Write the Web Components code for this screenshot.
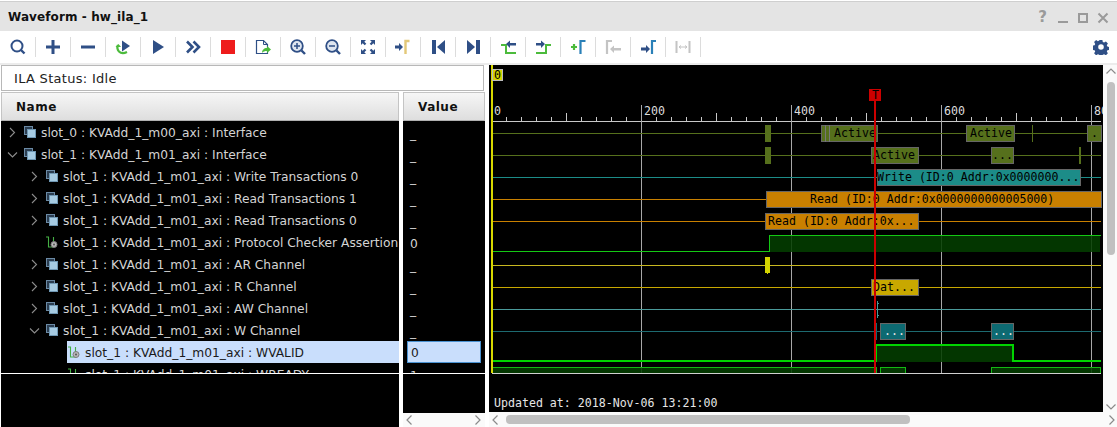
<!DOCTYPE html>
<html>
<head>
<meta charset="utf-8">
<title>Waveform - hw_ila_1</title>
<style>
  html, body { margin: 0; padding: 0; background: #fff; overflow: hidden; }
  body { width: 1117px; height: 427px; font-family: "DejaVu Sans", sans-serif; }
</style>
</head>
<body>
<wave-window></wave-window>
<script>
const BLUE = "#2f4f86";
const GREEN = "#4cbb3c";
const GREY = "#c4c4c4";

const TOOL_ICONS = {
  search: `<circle cx="9" cy="9" r="5.5" fill="none" stroke="${BLUE}" stroke-width="2"/><path d="M13 13l3.5 3.5" stroke="${BLUE}" stroke-width="2.4"/>`,
  plus: `<path d="M3 10h14M10 3v14" stroke="${BLUE}" stroke-width="3"/>`,
  minus: `<path d="M3 10h14" stroke="${BLUE}" stroke-width="3"/>`,
  rerun: `<path d="M9 3.5l8 5.5-8 5.5z" fill="${BLUE}"/><path d="M5 8a6 6 0 0 0 1 6.5c2 2 5 2 8 .5" fill="none" stroke="${GREEN}" stroke-width="2.2"/><path d="M2.5 10l3-3 2.5 3z" fill="${GREEN}"/>`,
  play: `<path d="M5 3l11 7-11 7z" fill="${BLUE}"/>`,
  fast: `<path d="M4 4.500l5.500 5.500-5.500 5.500M10.500 4.500l5.500 5.500-5.500 5.500" fill="none" stroke="${BLUE}" stroke-width="2.600"/>`,
  stop: `<rect x="3" y="3" width="14" height="14" fill="#ee1c1c"/>`,
  export: `<path d="M3.500 3.500h7l4 4v9h-11z" fill="#fff" stroke="${BLUE}" stroke-width="1.200"/><path d="M10.500 3.500v4h4" fill="none" stroke="${BLUE}"/><path d="M9 16c0-3 2-5 5-5v-2l4 3.500-4 3.500v-2c-2 0-4 .5-5 2z" fill="${GREEN}"/>`,
  zoomin: `<circle cx="9" cy="9" r="5.800" fill="#dfe6f0" stroke="${BLUE}" stroke-width="1.800"/><path d="M6 9h6M9 6v6" stroke="${BLUE}" stroke-width="1.500"/><path d="M13.500 13.500l3.500 3.500" stroke="${BLUE}" stroke-width="2.400"/>`,
  zoomout: `<circle cx="9" cy="9" r="5.800" fill="#dfe6f0" stroke="${BLUE}" stroke-width="1.800"/><path d="M6 9h6" stroke="${BLUE}" stroke-width="1.500"/><path d="M13.500 13.500l3.500 3.500" stroke="${BLUE}" stroke-width="2.400"/>`,
  fit: `<path d="M3 3h5l-1.700 1.700 2 2-1.600 1.600-2-2L3 8zM17 3v5l-1.700-1.700-2 2-1.600-1.600 2-2L12 3zM3 17v-5l1.700 1.700 2-2 1.600 1.600-2 2L8 17zM17 17h-5l1.700-1.700-2-2 1.600-1.600 2 2L17 12z" fill="${BLUE}"/>`,
  nextmark: `<path d="M2 8.500h4V6l4 4-4 4v-2.500H2z" fill="${BLUE}"/><path d="M12.500 17V4h4" fill="none" stroke="#e3c878" stroke-width="2.400"/>`,
  first: `<rect x="4" y="3" width="4" height="14" fill="${BLUE}"/><path d="M17 3v14l-8-7z" fill="${BLUE}"/>`,
  last: `<rect x="13" y="3" width="4" height="14" fill="${BLUE}"/><path d="M4 3v14l8-7z" fill="${BLUE}"/>`,
  fall: `<path d="M3 8h5v8h10" fill="none" stroke="${GREEN}" stroke-width="2"/><path d="M8 7l4-3.500V6h6v2.500h-6V11z" fill="${BLUE}"/>`,
  rise: `<path d="M3 16h10V8h5" fill="none" stroke="${GREEN}" stroke-width="2"/><path d="M12 7L8 3.500V6H3v2.500h5V11z" fill="${BLUE}"/>`,
  addmark: `<path d="M3 10h6M6 7v6" stroke="${GREEN}" stroke-width="2.200"/><path d="M12.500 17V4h5" fill="none" stroke="#2a80b8" stroke-width="2.200"/>`,
  prevmark: `<path d="M4 17V4h5" fill="none" stroke="${GREY}" stroke-width="2.200"/><path d="M7 12l4-3.500V11h7v2.500h-7V16z" fill="${GREY}"/>`,
  nextcur: `<path d="M3 10.500h5V8l4 4-4 4v-2.500H3z" fill="${BLUE}"/><path d="M14 17V4h4" fill="none" stroke="#2a80b8" stroke-width="2.200"/>`,
  span: `<path d="M3.500 4v12M16.500 4v12" stroke="${GREY}" stroke-width="2"/><path d="M6 10h8M6 10l2-1.500M6 10l2 1.500M14 10l-2-1.500M14 10l-2 1.500" stroke="${GREY}" fill="none"/>`,
};

class ToolBtn extends HTMLElement {
  connectedCallback() {
    this.attachShadow({ mode: "open" });
    const icon = this.getAttribute("icon");
    this.shadowRoot.innerHTML = `
      <style>
        :host { display: flex; width: 35px; height: 20px; box-sizing: border-box; align-items: center; justify-content: center; border-right: 1px solid #dcdcdc; }
        svg { width: 20px; height: 20px; display: block; }
      </style>
      <svg viewBox="0 0 20 20">${TOOL_ICONS[icon]}</svg>`;
  }
}

class TitleBar extends HTMLElement {
  connectedCallback() {
    this.attachShadow({ mode: "open" });
    this.shadowRoot.innerHTML = `
      <style>
        :host { display: flex; align-items: center; height: 30px; box-sizing: border-box; margin-top: 1px; border-top: 1px solid #cfcfcf; background: #e4e4e4; padding: 0 8px 0 8px; }
        .title { font: bold 12px "DejaVu Sans", sans-serif; letter-spacing: .1px; color: #111; flex: 1; }
        .ctl { display: flex; align-items: center; gap: 8px; color: #9a9a9a; margin-top: 2px; }
        .help { font: bold 15px "DejaVu Sans", sans-serif; margin-right: 2px; margin-top: -2px; }
        svg { width: 12px; height: 12px; display: block; }
      </style>
      <div class="title"><slot></slot></div>
      <div class="ctl">
        <span class="help">?</span>
        <svg viewBox="0 0 12 12"><path d="M1 10h10" stroke="#9a9a9a" stroke-width="2"/></svg>
        <svg viewBox="0 0 12 12"><rect x="2" y="2" width="8" height="8" fill="none" stroke="#9a9a9a" stroke-width="2"/></svg>
        <svg viewBox="0 0 12 12"><path d="M1.500 1.500l9 9M10.500 1.500l-9 9" stroke="#9a9a9a" stroke-width="2"/></svg>
      </div>`;
  }
}

class ToolBar extends HTMLElement {
  connectedCallback() {
    this.attachShadow({ mode: "open" });
    this.shadowRoot.innerHTML = `
      <style>
        :host { display: flex; align-items: center; height: 32px; background: #fff; padding: 0 8px 0 1px; }
        .left { display: flex; flex: 1; }
        svg { width: 16px; height: 16px; display: block; }
      </style>
      <div class="left"><slot></slot></div>
      <svg viewBox="0 0 16 16"><path fill="${BLUE}" fill-rule="evenodd" d="M6.600 1h2.800l.4 2 1.300.6 1.800-1.100 2 2-1.100 1.800.6 1.300 2 .4v2.800l-2 .4-.6 1.300 1.100 1.800-2 2-1.800-1.100-1.300.6-.4 2H6.600l-.4-2-1.300-.6-1.800 1.100-2-2 1.100-1.800-.6-1.300-2-.4V6.600l2-.4.6-1.300-1.100-1.800 2-2 1.800 1.100 1.300-.6zM8 5.200a2.800 2.800 0 1 0 0 5.600 2.800 2.800 0 0 0 0-5.600z"/></svg>`;
  }
}

class ColHeader extends HTMLElement {
  connectedCallback() {
    this.attachShadow({ mode: "open" });
    this.shadowRoot.innerHTML = `
      <style>
        :host { display: flex; align-items: center; height: 29px; box-sizing: border-box; border: 1px solid #c4c4c4; border-bottom-color: #b0b0b0; background: linear-gradient(#f6f6f6, #dedede); font: bold 12px "DejaVu Sans", sans-serif; color: #111; letter-spacing: .5px; padding-left: 14px; }
      </style>
      <slot></slot>`;
  }
}

class TreeRow extends HTMLElement {
  connectedCallback() {
    this.attachShadow({ mode: "open" });
    const level = Number(this.getAttribute("level") || 0);
    const kind = this.getAttribute("kind");
    const expand = this.getAttribute("expand");
    const chevron = expand === "open"
      ? `<path d="M1 3.500l4.500 4.500 4.500-4.500" fill="none" stroke="#8c8c8c" stroke-width="1.100"/>`
      : expand === "closed" ? `<path d="M3 1l4.500 4.500L3 10" fill="none" stroke="#8c8c8c" stroke-width="1.100"/>` : "";
    const icon = kind === "signal"
      ? `<path d="M0 1h2.500V11h5V1" fill="none" stroke="#45b045" stroke-width="1.100"/><circle cx="8" cy="8.500" r="3" fill="#b8b8b8" stroke="#7a7a7a"/><circle cx="8" cy="8.500" r="1" fill="#555"/>`
      : `<rect x=".500" y=".500" width="8" height="8" fill="#2b3d50" stroke="#6b8aa5"/><rect x="3.500" y="3.500" width="8" height="8" fill="#a6cbe2" stroke="#6f97b3"/>`;
    this.shadowRoot.innerHTML = `
      <style>
        :host { display: flex; align-items: center; height: 22px; white-space: nowrap; color: #d4d4d4; font: 12.25px "DejaVu Sans", sans-serif; padding-left: ${6 + level * 22}px; box-sizing: border-box; overflow: hidden; }
        .chev { width: 11px; height: 11px; flex: none; margin-right: 6px; }
        .ico { width: 12px; height: 12px; flex: none; margin-right: 5px; margin-top: -1px; }
        .txt { display: flex; align-items: center; height: 22px; flex: 1; padding-top: 2px; box-sizing: border-box; }
        :host([selected]) { padding-left: 0; margin-left: 66px; background: #c9defc; color: #1a1a1a; }
        :host([selected]) .chev { display: none; }
        :host([selected]) .ico { margin-left: 1px; }
      </style>
      <svg class="chev" viewBox="0 0 11 11">${chevron}</svg>
      <svg class="ico" viewBox="0 0 12 12">${icon}</svg>
      <div class="txt"><slot></slot></div>`;
  }
}

class ValueCell extends HTMLElement {
  connectedCallback() {
    this.attachShadow({ mode: "open" });
    this.shadowRoot.innerHTML = `
      <style>
        :host { display: flex; align-items: center; height: 22px; box-sizing: border-box; color: #d4d4d4; font: 12.25px "DejaVu Sans", sans-serif; padding: 3px 0 0 7px; }
        :host([selected]) { margin: 0 4px; padding: 2px 0 0 3px; background: #c9defc; color: #1a1a1a; border: 1px solid #4a92d2; height: 22px; }
      </style>
      <slot></slot>`;
  }
}

class ScrollBar extends HTMLElement {
  connectedCallback() {
    this.attachShadow({ mode: "open" });
    const vertical = this.getAttribute("dir") === "v";
    const before = Number(this.getAttribute("before") || 0);
    const size = Number(this.getAttribute("size") || 0);
    const line = `fill="none" stroke="#8a8a8a" stroke-width="1.200"`;
    const a = vertical ? `<path d="M1.500 7.500L6 3l4.500 4.500" ${line}/>` : `<path d="M7.500 1.500L3 6l4.500 4.500" ${line}/>`;
    const b = vertical ? `<path d="M1.500 4.500L6 9l4.500-4.500" ${line}/>` : `<path d="M4.500 1.500L9 6l-4.500 4.500" ${line}/>`;
    const thumb = size
      ? `<div class="thumb" style="${vertical ? `margin-top:${before}px;height:${size}px` : `margin-left:${before}px;width:${size}px`}"></div>` : "";
    this.shadowRoot.innerHTML = `
      <style>
        :host { display: flex; flex-direction: ${vertical ? "column" : "row"}; align-items: center; background: #fafafa; box-sizing: border-box; ${vertical ? "padding: 1px 0 0 1px;" : "padding: 0 0 0 1px;"} }
        svg { width: 12px; height: 12px; flex: none; }
        .track { flex: 1; align-self: stretch; display: flex; align-items: center; flex-direction: ${vertical ? "column" : "row"}; justify-content: flex-start; }
        .thumb { background: #c0c0c0; border-radius: 4px; ${vertical ? "width: 8px; align-self: center;" : "height: 9px;"} flex: none; }
      </style>
      <svg viewBox="0 0 12 12">${a}</svg>
      <div class="track">${thumb}</div>
      <svg viewBox="0 0 12 12">${b}</svg>`;
  }
}

class WaveView extends HTMLElement {
  connectedCallback() {
    this.attachShadow({ mode: "open" });
    const parts = [];
    const rect = (x, y, w, h, fill, extra = "") => parts.push(`<rect x="${x}" y="${y}" width="${w}" height="${h}" fill="${fill}" ${extra}/>`);
    const text = (x, y, s, fill = "#000") => parts.push(`<text x="${x}" y="${y}" fill="${fill}">${s}</text>`);
    const hline = (y, c, x1 = 492, x2 = 1101) => rect(x1, y, x2 - x1, 1, c);
    const block = (x1, x2, y, h, fill, border = "#666") => {
      parts.push(`<rect x="${x1 + 0.5}" y="${y + 0.5}" width="${x2 - x1 - 1}" height="${h - 1}" fill="${fill}" stroke="${border}"/>`);
    };

    // ruler
    hline(121, "#c8c8c8");
    for (let i = 1; i * 15 + 491 < 1101; i++) {
      const x = 491 + i * 15;
      if (i % 10 === 0) continue;
      const tall = i % 5 === 0;
      rect(x, tall ? 113 : 117, 1, tall ? 8 : 4, "#c8c8c8");
    }
    // grid
    [641, 791, 941, 1091].forEach((x) => rect(x, 105, 1, 268, "#a8a8a8"));
    [["0", 494], ["200", 644], ["400", 794], ["600", 944], ["80", 1094]].forEach(([s, x]) => text(x, 115, s, "#dcdcdc"));

    // signal lines
    const OLIVE = "#56701c";
    hline(133, OLIVE);
    hline(155, OLIVE);
    hline(177, "#1c8c88");
    hline(199, "#c98000");
    hline(221, "#c98000");
    hline(265, "#c8b820");
    hline(287, "#c8a800");
    hline(309, "#4a9a9a");
    hline(331, "#1d6a70");

    // row 1
    block(765, 771, 125, 17, OLIVE, OLIVE);
    block(821, 878, 125, 17, OLIVE);
    rect(825, 125, 1, 17, "#777");
    rect(829, 125, 1, 17, "#777");
    text(834, 137, "Active");
    block(966, 1015, 125, 17, OLIVE);
    text(970, 137, "Active");
    rect(1032, 125, 1, 17, OLIVE);
    block(1087, 1102, 125, 17, OLIVE);
    text(1091, 137, ".");

    // row 2
    block(765, 771, 147, 17, OLIVE, OLIVE);
    block(871, 919, 147, 17, OLIVE);
    text(873, 159, "Active");
    block(991, 1014, 147, 17, OLIVE);
    text(992, 159, "...");
    rect(1079, 147, 2, 17, OLIVE);

    // row 3 to 5
    block(877, 1081, 169, 17, "#1c8c88");
    text(877, 181, "Write (ID:0 Addr:0x0000000...");
    block(766, 1102, 191, 17, "#c98000");
    text(810, 203, "Read (ID:0 Addr:0x0000000000005000)");
    block(765, 919, 213, 17, "#c98000");
    text(768, 225, "Read (ID:0 Addr:0x...");

    // row 6
    rect(770, 236, 330, 16, "#033d00", 'fill-opacity=".88"');
    rect(492, 251, 278, 1, "#14c814");
    rect(769, 235, 1, 17, "#14c814");
    rect(769, 235, 332, 1, "#14c814");

    // row 7 to 9
    rect(765, 257, 5, 16, "#d4d400");
    rect(767, 273, 1, 1, "#d4d400");
    block(871, 919, 279, 17, "#c8a800");
    text(873, 291, "Dat...");
    rect(877, 301, 1, 17, "#4a9a9a");
    for (let y = 303; y < 318; y += 6) rect(878, y, 1, 1, "#4a9a9a");

    // row 10
    rect(876, 323, 1, 17, "#0d6a72");
    block(880, 906, 323, 17, "#0d6a72");
    text(884, 335, "...", "#e8e8e8");
    block(991, 1014, 323, 17, "#0d6a72");
    text(993, 335, "...", "#e8e8e8");

    // row 11
    rect(876, 346, 137, 16, "#033d00", 'fill-opacity=".88"');
    rect(492, 360, 384, 2, "#00d400");
    rect(875, 344, 2, 18, "#00d400");
    rect(875, 344, 139, 2, "#00d400");
    rect(1012, 344, 2, 18, "#00d400");
    rect(1012, 360, 89, 2, "#00d400");

    // row 12
    [[492, 877], [880, 906], [991, 1101]].forEach(([a, b]) => {
      rect(a, 368, b - a, 5, "#033d00", 'fill-opacity=".88"');
      rect(a, 367, b - a, 1, "#14b814");
      rect(a, 367, 1, 6, "#14b814");
      rect(b - 1, 367, 1, 6, "#14b814");
    });
    hline(373, "#d0d0d0");

    // markers
    rect(491, 65, 2, 308, "#d8d800");
    parts.push(`<rect x="492.500" y="69.500" width="10" height="11" fill="#d4d400" stroke="#bdbdbd"/>`);
    text(494, 79, "0");
    rect(874, 100, 2, 273, "#cc0000");
    rect(869, 89, 12, 12, "#cc0000");
    text(872, 99, "T");
    text(494, 407, "Updated at: 2018-Nov-06 13:21:00", "#e6e6e6");

    this.shadowRoot.innerHTML = `
      <style>
        :host { display: block; width: 614px; height: 347px; background: #000; }
        svg { display: block; shape-rendering: crispEdges; }
        text { font: 11.6px "DejaVu Sans Mono", monospace; white-space: pre; }
      </style>
      <svg width="614" height="347" viewBox="489 65 614 347">${parts.join("")}</svg>`;
  }
}

const ROWS = [
  [0, "closed", "iface", "slot_0 : KVAdd_1_m00_axi : Interface", "_"],
  [0, "open", "iface", "slot_1 : KVAdd_1_m01_axi : Interface", "_"],
  [1, "closed", "iface", "slot_1 : KVAdd_1_m01_axi : Write Transactions 0", "_"],
  [1, "closed", "iface", "slot_1 : KVAdd_1_m01_axi : Read Transactions 1", "_"],
  [1, "closed", "iface", "slot_1 : KVAdd_1_m01_axi : Read Transactions 0", "_"],
  [1, "none", "signal", "slot_1 : KVAdd_1_m01_axi : Protocol Checker Assertion", "0"],
  [1, "closed", "iface", "slot_1 : KVAdd_1_m01_axi : AR Channel", "_"],
  [1, "closed", "iface", "slot_1 : KVAdd_1_m01_axi : R Channel", "_"],
  [1, "closed", "iface", "slot_1 : KVAdd_1_m01_axi : AW Channel", "_"],
  [1, "open", "iface", "slot_1 : KVAdd_1_m01_axi : W Channel", "_"],
  [2, "none", "signal", "slot_1 : KVAdd_1_m01_axi : WVALID", "0", true],
  [2, "none", "signal", "slot_1 : KVAdd_1_m01_axi : WREADY", "1"],
];

class WaveWindow extends HTMLElement {
  connectedCallback() {
    this.attachShadow({ mode: "open" });
    const tools = ["search", "plus", "minus", "rerun", "play", "fast", "stop", "export", "zoomin", "zoomout", "fit", "nextmark",
      "first", "last", "fall", "rise", "addmark", "prevmark", "nextcur", "span"];
    const names = ROWS.map((r) => `<tree-row level="${r[0]}" expand="${r[1]}" kind="${r[2]}" ${r[5] ? "selected" : ""}>${r[3]}</tree-row>`).join("");
    const values = ROWS.map((r) => `<value-cell ${r[5] ? "selected" : ""}>${r[4]}</value-cell>`).join("");
    this.shadowRoot.innerHTML = `
      <style>
        :host { display: block; width: 1117px; height: 427px; overflow: hidden; background: #fff; }
        .gap { height: 2px; background: #ececec; }
        .main { display: flex; height: 362px; }
        .left { width: 486px; padding-left: 1px; box-sizing: border-box; flex: none; display: flex; flex-direction: column; }
        .status { height: 26px; box-sizing: border-box; width: 483px; border: 1px solid #b8b8b8; background: #fff; display: flex; align-items: center; padding-left: 12px; font: 13px "DejaVu Sans", sans-serif; letter-spacing: .3px; color: #222; margin-bottom: 1px; }
        .cols { display: flex; gap: 4px; flex: 1; min-height: 0; }
        .col { display: flex; flex-direction: column; }
        .name { width: 398px; }
        .val { width: 82px; }
        .rows { height: 252px; background: #000; overflow: hidden; flex: none; }
        .under { background: #000; border-top: 1px solid #fff; flex: 1; }
        .val .under { flex: none; height: 39px; }
        .val scroll-bar { height: 14px; padding-right: 2px; }
        .wave { margin-left: 3px; display: grid; grid-template-columns: 614px 14px; grid-template-rows: 347px 15px; }
      </style>
      <title-bar>Waveform - hw_ila_1</title-bar>
      <tool-bar>${tools.map((t) => `<tool-btn icon="${t}"></tool-btn>`).join("")}</tool-bar>
      <div class="gap"></div>
      <div class="main">
        <div class="left">
          <div class="status">ILA Status: Idle</div>
          <div class="cols">
            <div class="col name">
              <col-header>Name</col-header>
              <div class="rows">${names}</div>
              <div class="under"></div>
            </div>
            <div class="col val">
              <col-header>Value</col-header>
              <div class="rows">${values}</div>
              <div class="under"></div>
              <scroll-bar></scroll-bar>
            </div>
          </div>
        </div>
        <div class="wave">
          <wave-view></wave-view>
          <scroll-bar dir="v" before="4" size="173"></scroll-bar>
          <scroll-bar before="4" size="404" style="grid-column: 1 / 3"></scroll-bar>
        </div>
      </div>`;
  }
}

customElements.define("tool-btn", ToolBtn);
customElements.define("title-bar", TitleBar);
customElements.define("tool-bar", ToolBar);
customElements.define("col-header", ColHeader);
customElements.define("tree-row", TreeRow);
customElements.define("value-cell", ValueCell);
customElements.define("scroll-bar", ScrollBar);
customElements.define("wave-view", WaveView);
customElements.define("wave-window", WaveWindow);
</script>
</body>
</html>
